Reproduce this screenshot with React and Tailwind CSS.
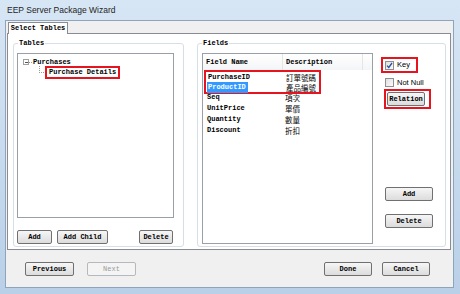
import React from 'react';

const rows = [
  { name: 'PurchaseID', desc: '訂單號碼' },
  { name: 'ProductID', desc: '產品編號' },
  { name: 'Seq', desc: '項次' },
  { name: 'UnitPrice', desc: '單價' },
  { name: 'Quantity', desc: '數量' },
  { name: 'Discount', desc: '折扣' },
];

function Btn({ children, className = '', disabled = false }) {
  return (
    <button
      disabled={disabled}
      className={
        'h-[14px] flex items-center justify-center rounded-[2px] border text-[7px] font-bold leading-none ' +
        (disabled
          ? 'border-[#b5b9bd] bg-[#f4f4f4] text-[#9a9a9a] font-normal '
          : 'border-[#707070] bg-gradient-to-b from-[#f6f6f6] to-[#dcdcdc] text-black ') +
        className
      }
    >
      {children}
    </button>
  );
}

function Check({ checked }) {
  return (
    <span className="w-[9px] h-[9px] border border-[#8e8f8f] bg-gradient-to-br from-[#e0e0e0] to-[#fafafa] flex items-center justify-center">
      {checked && (
        <svg width="7" height="7" viewBox="0 0 7 7">
          <path d="M1 3.6 L2.8 5.5 L6 1" stroke="#2a4f9c" strokeWidth="1.3" fill="none" />
        </svg>
      )}
    </span>
  );
}

export default function App() {
  return (
    <div className="w-[460px] h-[294px] flex flex-col bg-gradient-to-b from-[#d7e6f5] to-[#b9d0e8] overflow-hidden font-['Liberation_Mono',monospace] text-black">
      {/* title bar */}
      <div className="h-[20px] shrink-0 pl-[7px] flex items-center text-[8.5px] font-['Liberation_Sans',sans-serif] text-[#1e1e1e]">
        EEP Server Package Wizard
      </div>

      {/* client area */}
      <div className="flex-1 ml-[5px] mr-[6px] mb-[6px] bg-[#f0f0f0] border border-[#8ea4bb] flex flex-col">
        {/* tab strip */}
        <div className="pt-[1px] pl-[2px] flex">
          <div className="relative z-10 -mb-[1px] h-[12px] w-[60px] bg-white border border-b-0 border-[#898c95] flex items-center justify-center text-[7px] font-bold">
            Select Tables
          </div>
        </div>

        {/* tab panel */}
        <div className="ml-[1px] mr-[2px] h-[217px] bg-white border border-[#898c95] flex pt-[9px] pl-[5px] gap-[13px]">
          {/* Tables group */}
          <div className="relative w-[171px] h-[204px] border border-[#d5dfe5] rounded-[3px] pt-[9px] pl-[3px]">
            <span className="absolute -top-[5px] left-[4px] bg-white px-[1px] text-[7px] font-bold leading-[9px]">Tables</span>
            <div className="w-[157px] h-[165px] border border-[#9aa0a8] pt-[4px] pl-[5px]">
              <div className="flex items-center h-[8px]">
                <span className="w-[6px] h-[6px] border border-[#a0a0a0] flex items-center justify-center">
                  <span className="w-[3px] h-px bg-[#555]" />
                </span>
                <span className="w-[3px] border-t border-dotted border-[#999]" />
                <span className="text-[7px] font-bold leading-none ml-px">Purchases</span>
              </div>
              <div className="flex items-start ml-[16px] h-[13px]">
                <span className="w-[5px] h-[7px] border-l border-b border-dotted border-[#999]" />
                <span className="ml-px border-2 border-[#e5141e] h-[13px] px-[2px] flex items-center text-[7px] font-bold leading-none">
                  Purchase Details
                </span>
              </div>
            </div>
            <div className="flex mt-[12px]">
              <Btn className="w-[35px]">Add</Btn>
              <Btn className="w-[51px] ml-[5px]">Add Child</Btn>
              <Btn className="w-[34px] ml-[31px]">Delete</Btn>
            </div>
          </div>

          {/* Fields group */}
          <div className="relative w-[249px] h-[204px] border border-[#d5dfe5] rounded-[3px] pt-[9px] pl-[4px] flex">
            <span className="absolute -top-[5px] left-[4px] bg-white px-[1px] text-[7px] font-bold leading-[9px]">Fields</span>
            <div className="w-[171px] h-[191px] border border-[#9aa0a8] flex flex-col">
              <div className="h-[16px] shrink-0 flex text-[7px] font-bold bg-gradient-to-b from-white to-[#f4f5f7]">
                <div className="w-[80px] pl-[3px] flex items-center border-r border-[#e3e5e8]">Field Name</div>
                <div className="w-[80px] pl-[3px] flex items-center border-r border-[#e3e5e8]">Description</div>
              </div>
              <div className="ml-[1px] w-[117px] border-2 border-[#e5141e] -mb-[2px] relative z-10">
                {rows.slice(0, 2).map((r, i) => (
                  <div key={r.name} className="h-[11px] -my-px first:mt-0 flex items-center text-[7px] font-bold">
                    <span
                      className={
                        'w-[80px] pl-px h-[11px] flex items-center ' +
                        (i === 1 ? '' : '')
                      }
                    >
                      <span className={i === 1 ? 'bg-[#3399ff] text-white h-[11px] px-px flex items-center w-[41px]' : 'px-px'}>
                        {r.name}
                      </span>
                    </span>
                    <span className="font-['Noto_Sans_CJK_TC',sans-serif] font-normal text-[7.5px]">{r.desc}</span>
                  </div>
                ))}
              </div>
              {rows.slice(2).map((r) => (
                <div key={r.name} className="h-[11px] flex items-center text-[7px] font-bold">
                  <span className="w-[82px] pl-[4px]">{r.name}</span>
                  <span className="font-['Noto_Sans_CJK_TC',sans-serif] font-normal text-[7.5px]">{r.desc}</span>
                </div>
              ))}
            </div>

            <div className="ml-[8px] w-[52px] h-[191px] flex flex-col pb-[16px]">
              <div className="mt-[4px] w-[37px] h-[16px] border-2 border-[#e5141e] flex items-center pl-[2px] gap-[3px] font-['Liberation_Sans',sans-serif] text-[7.5px]">
                <Check checked />
                <span>Key</span>
              </div>
              <div className="mt-[5px] h-[9px] flex items-center pl-[4px] gap-[3px] font-['Liberation_Sans',sans-serif] text-[7.5px]">
                <Check />
                <span>Not Null</span>
              </div>
              <div className="mt-[2px] ml-[3px] w-[47px] h-[20px] border-2 border-[#e5141e] flex items-center pl-px">
                <Btn className="w-[38px]">Relation</Btn>
              </div>
              <div className="flex-1" />
              <Btn className="w-[48px] ml-[4px]">Add</Btn>
              <Btn className="w-[48px] ml-[4px] mt-[13px]">Delete</Btn>
            </div>
          </div>
        </div>

        {/* footer */}
        <div className="flex-1 flex items-center pl-[19px] pr-[23px] pt-[1px]">
          <Btn className="w-[49px]">Previous</Btn>
          <Btn className="w-[49px] ml-[13px]" disabled>Next</Btn>
          <div className="flex-1" />
          <Btn className="w-[48px]">Done</Btn>
          <Btn className="w-[48px] ml-[10px]">Cancel</Btn>
        </div>
      </div>
    </div>
  );
}
